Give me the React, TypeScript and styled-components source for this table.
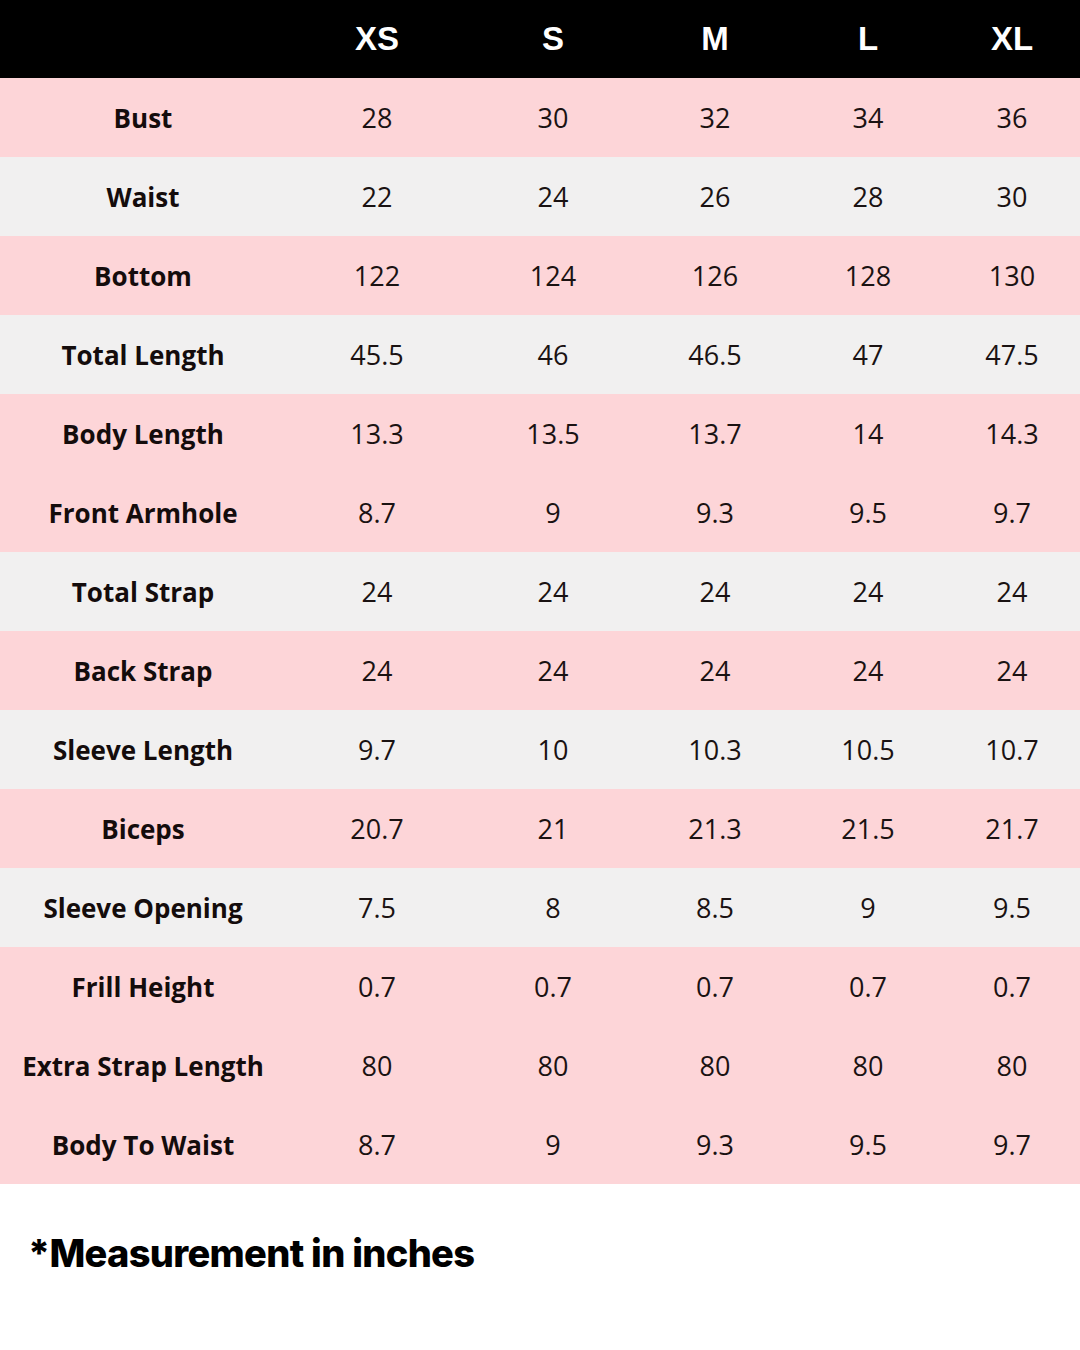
import React from 'react';
import styled, { createGlobalStyle } from 'styled-components';

const sizes = ['XS', 'S', 'M', 'L', 'XL'];

type Tone = 'pink' | 'gray';

const rows: { label: string; tone: Tone; values: string[] }[] = [
  { label: 'Bust', tone: 'pink', values: ['28', '30', '32', '34', '36'] },
  { label: 'Waist', tone: 'gray', values: ['22', '24', '26', '28', '30'] },
  { label: 'Bottom', tone: 'pink', values: ['122', '124', '126', '128', '130'] },
  { label: 'Total Length', tone: 'gray', values: ['45.5', '46', '46.5', '47', '47.5'] },
  { label: 'Body Length', tone: 'pink', values: ['13.3', '13.5', '13.7', '14', '14.3'] },
  { label: 'Front Armhole', tone: 'pink', values: ['8.7', '9', '9.3', '9.5', '9.7'] },
  { label: 'Total Strap', tone: 'gray', values: ['24', '24', '24', '24', '24'] },
  { label: 'Back Strap', tone: 'pink', values: ['24', '24', '24', '24', '24'] },
  { label: 'Sleeve Length', tone: 'gray', values: ['9.7', '10', '10.3', '10.5', '10.7'] },
  { label: 'Biceps', tone: 'pink', values: ['20.7', '21', '21.3', '21.5', '21.7'] },
  { label: 'Sleeve Opening', tone: 'gray', values: ['7.5', '8', '8.5', '9', '9.5'] },
  { label: 'Frill Height', tone: 'pink', values: ['0.7', '0.7', '0.7', '0.7', '0.7'] },
  { label: 'Extra Strap Length', tone: 'pink', values: ['80', '80', '80', '80', '80'] },
  { label: 'Body To Waist', tone: 'pink', values: ['8.7', '9', '9.3', '9.5', '9.7'] },
];

const GlobalStyle = createGlobalStyle`
  body {
    margin: 0;
    background: #ffffff;
    font-family: 'Open Sans', 'Noto Sans', sans-serif;
  }
`;

const COLUMNS = '286px 182px 170px 154px 152px 136px';

const Page = styled.div`
  width: 1080px;
  height: 1350px;
  background: #ffffff;
  display: flex;
  flex-direction: column;
`;

const HeaderRow = styled.div`
  display: grid;
  grid-template-columns: ${COLUMNS};
  height: 78px;
  background: #000000;
  align-items: center;
`;

const SizeCell = styled.div`
  text-align: center;
  color: #ffffff;
  font-family: 'Liberation Sans', Arial, sans-serif;
  font-weight: 700;
  font-size: 33px;
  padding-bottom: 0px;
`;

const Row = styled.div<{ $tone: Tone }>`
  display: grid;
  grid-template-columns: ${COLUMNS};
  height: 79px;
  align-items: center;
  background: ${p => (p.$tone === 'pink' ? '#fdd5d8' : '#f1f0f0')};
`;

const Label = styled.div`
  text-align: center;
  font-family: 'Open Sans', sans-serif;
  font-weight: 700;
  font-size: 26px;
  color: #140c0c;
`;

const Value = styled.div`
  text-align: center;
  font-family: 'Open Sans', sans-serif;
  font-weight: 400;
  font-size: 27px;
  color: #1a1212;
`;

const Note = styled.div`
  padding: 46px 0 0 28px;
  font-family: Inter, 'Liberation Sans', sans-serif;
  font-weight: 800;
  font-size: 38px;
  letter-spacing: -0.7px;
  color: #000000;
`;

export default function App() {
  return (
    <Page>
      <GlobalStyle />
      <HeaderRow>
        <div />
        {sizes.map(s => (
          <SizeCell key={s}>{s}</SizeCell>
        ))}
      </HeaderRow>
      {rows.map(r => (
        <Row key={r.label} $tone={r.tone}>
          <Label>{r.label}</Label>
          {r.values.map((v, i) => (
            <Value key={i}>{v}</Value>
          ))}
        </Row>
      ))}
      <Note>*Measurement in inches</Note>
    </Page>
  );
}
